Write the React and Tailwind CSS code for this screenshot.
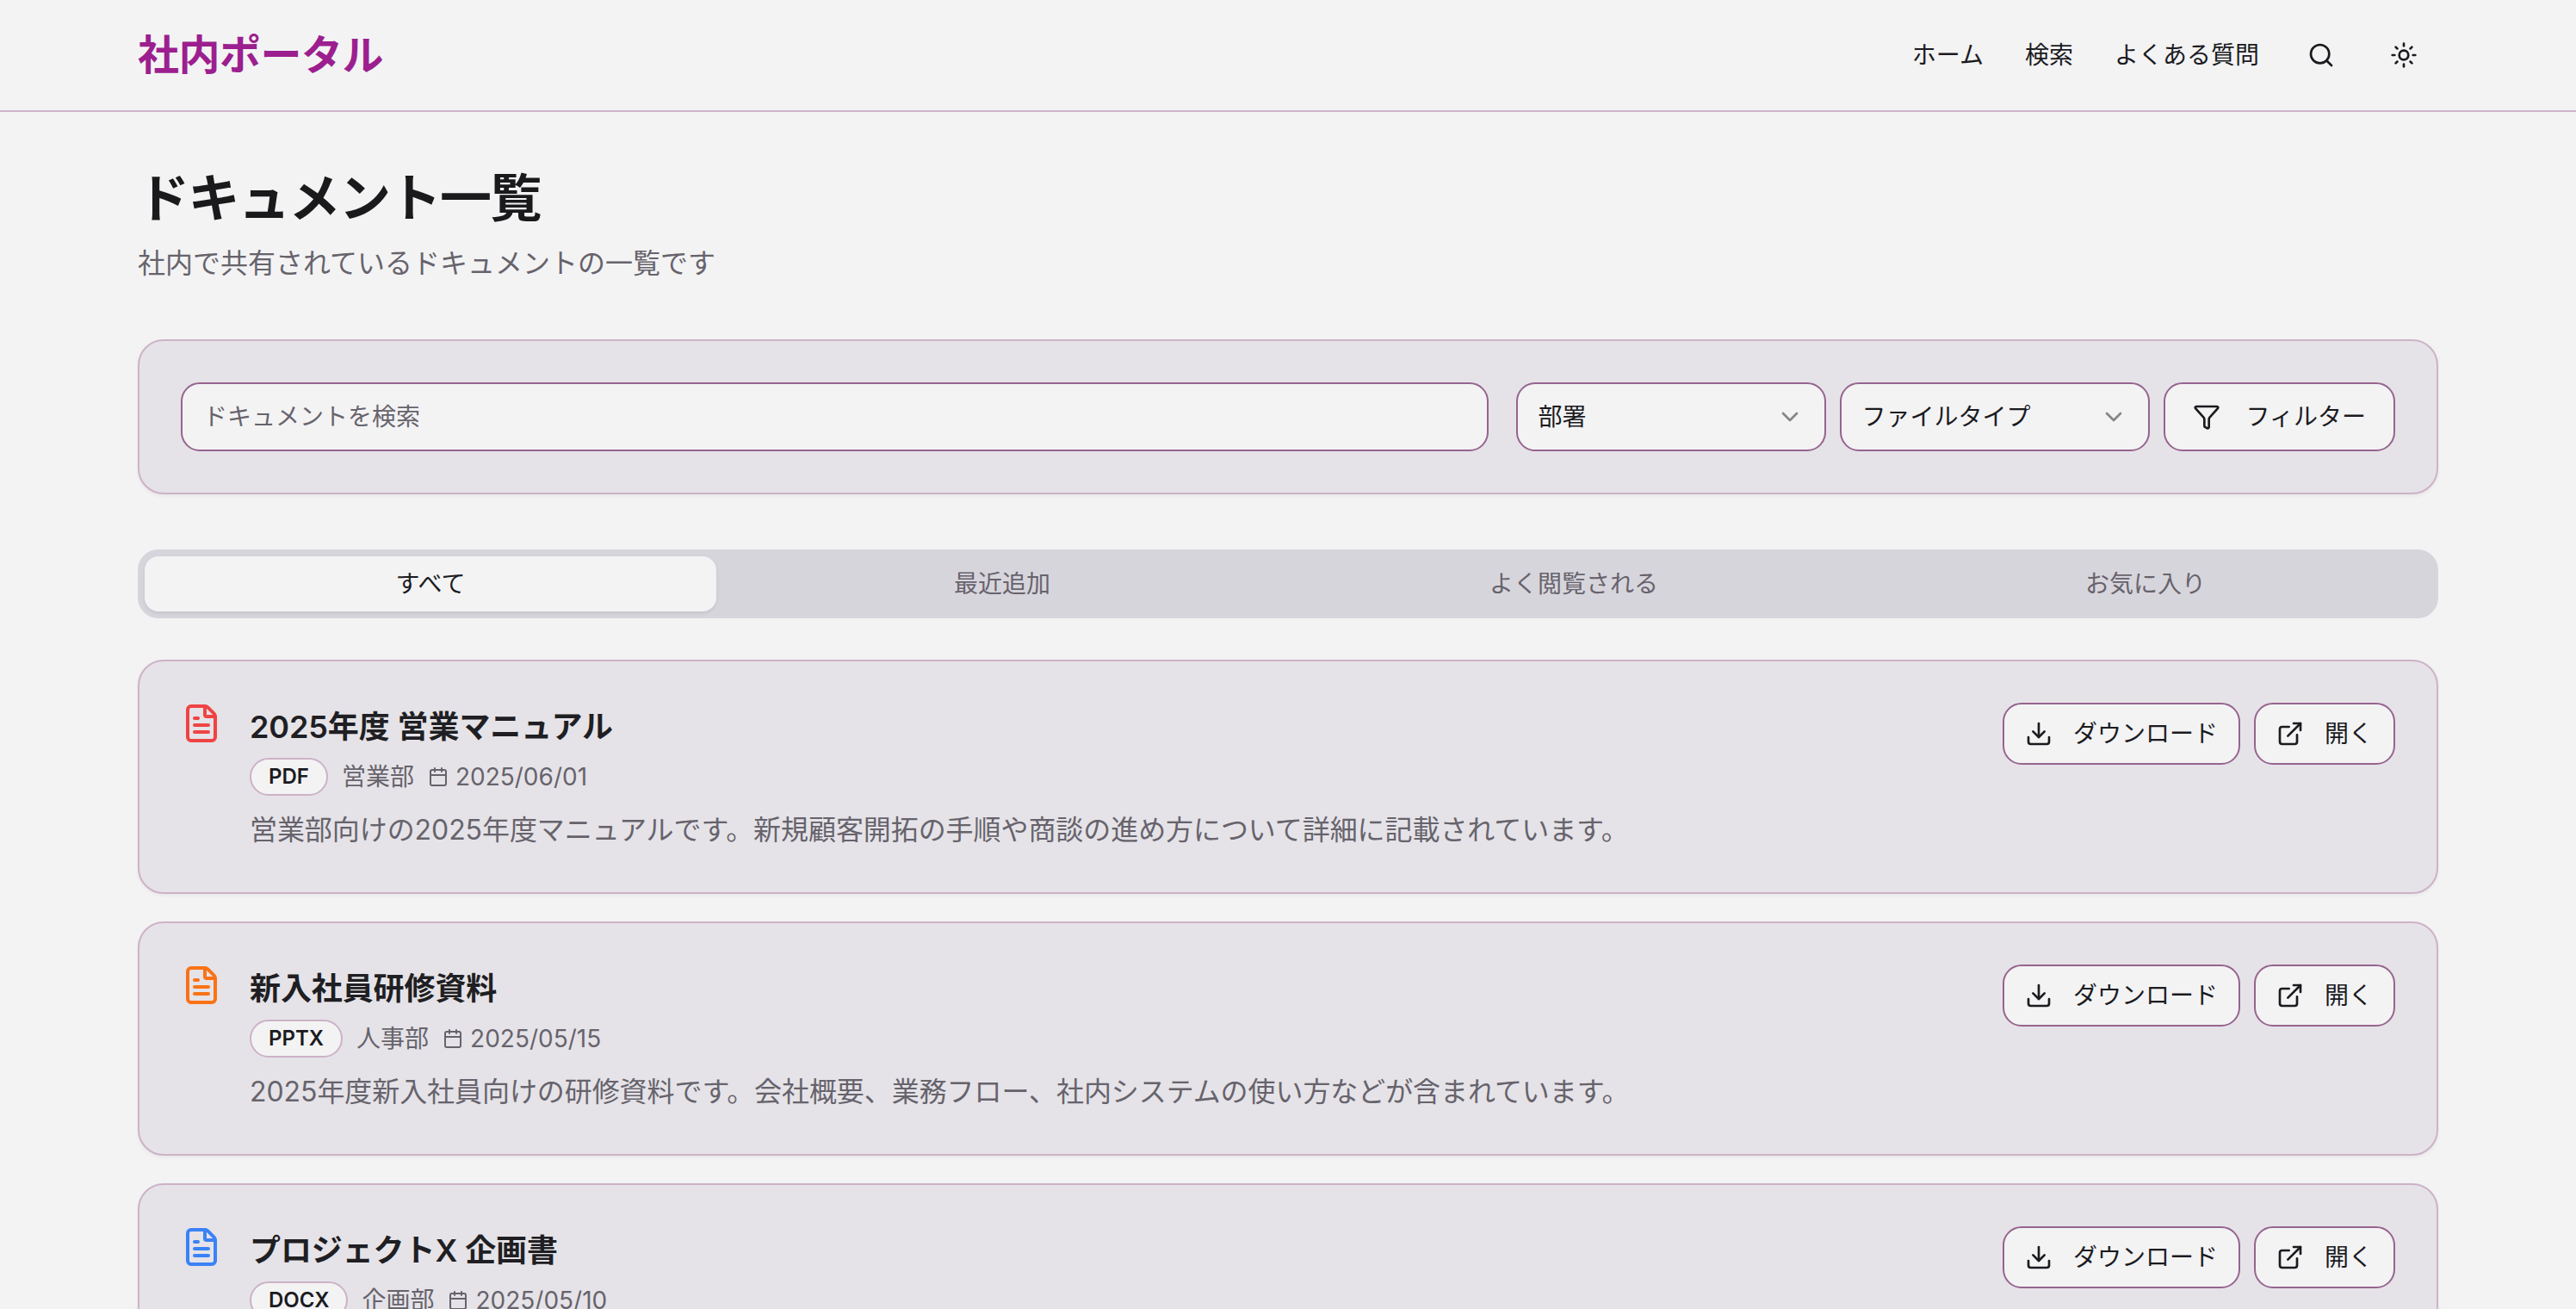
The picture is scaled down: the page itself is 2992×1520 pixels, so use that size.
import React from "react";
import { Search, Sun, ChevronDown, Funnel, FileText, Calendar, Download, ExternalLink } from "lucide-react";

const docs = [
  { title: "2025年度 営業マニュアル", type: "PDF", dept: "営業部", date: "2025/06/01", color: "text-[#ef4444]", desc: "営業部向けの2025年度マニュアルです。新規顧客開拓の手順や商談の進め方について詳細に記載されています。" },
  { title: "新入社員研修資料", type: "PPTX", dept: "人事部", date: "2025/05/15", color: "text-[#f97316]", desc: "2025年度新入社員向けの研修資料です。会社概要、業務フロー、社内システムの使い方などが含まれています。" },
  { title: "プロジェクトX 企画書", type: "DOCX", dept: "企画部", date: "2025/05/10", color: "text-[#3b82f6]", desc: "プロジェクトXの企画書です。プロジェクトの目的、スケジュール、予算について記載されています。" },
];

const tabs = ["すべて", "最近追加", "よく閲覧される", "お気に入り"];

function ActionButton({ icon: Icon, label }) {
  return (
    <button className="flex h-[72px] items-center gap-6 rounded-[22px] border-2 border-[#96648e] bg-[#f3f3f4] px-6 text-[28px] leading-10 text-[#1b1b1f]">
      <Icon size={32} strokeWidth={2} />
      <span>{label}</span>
    </button>
  );
}

function SelectBox({ label }) {
  return (
    <button className="flex h-20 w-[360px] items-center justify-between rounded-[22px] border-2 border-[#96648e] bg-[#f3f3f4] px-6 text-[28px] leading-10 text-[#1b1b1f]">
      <span>{label}</span>
      <ChevronDown size={32} strokeWidth={2} className="opacity-50" />
    </button>
  );
}

function DocCard({ doc }) {
  return (
    <div className="flex justify-between rounded-[30px] border-2 border-[#cdb2c7] bg-[#e5e3e8] p-12 shadow-[0_2px_4px_rgba(0,0,0,0.05)]">
      <div className="flex gap-8">
        <FileText size={48} strokeWidth={2} className={`shrink-0 ${doc.color}`} />
        <div className="flex flex-col">
          <h3 className="text-[36px] leading-[56px] font-semibold tracking-[-0.1px] text-[#1f1f23]">{doc.title}</h3>
          <div className="mt-2 flex h-11 items-center gap-4 text-[28px] leading-10 text-[#67636c]">
            <span className="flex h-[44px] items-center rounded-full border-2 border-[#cdb2c7] bg-[#f3f3f4] px-[20px] text-[24px] leading-8 font-semibold text-[#1b1b1f]">{doc.type}</span>
            <span>{doc.dept}</span>
            <span className="flex items-center gap-2">
              <Calendar size={24} strokeWidth={2} />
              <span>{doc.date}</span>
            </span>
          </div>
          <p className="mt-4 text-[32px] leading-[48px] tracking-[-0.07px] text-[#67636c]">{doc.desc}</p>
        </div>
      </div>
      <div className="flex shrink-0 items-start gap-4">
        <ActionButton icon={Download} label="ダウンロード" />
        <ActionButton icon={ExternalLink} label="開く" />
      </div>
    </div>
  );
}

export default function App() {
  return (
    <div lang="ja" className="h-[1520px] overflow-hidden bg-[#f3f3f4] font-['Inter','Noto_Sans_CJK_JP',sans-serif] text-[#1b1b1f]">
      <header className="border-b-2 border-[#cfb4c9]">
        <div className="flex h-32 items-center justify-between px-40">
          <div className="text-[48px] leading-[64px] font-bold tracking-[-0.5px] text-[#9c1f8f]">社内ポータル</div>
          <nav className="flex items-center">
            <div className="flex items-center gap-12 text-[28px] leading-10">
              <a>ホーム</a>
              <a>検索</a>
              <a>よくある質問</a>
            </div>
            <div className="ml-8 flex items-center gap-4">
              <button className="flex size-20 items-center justify-center"><Search size={32} strokeWidth={2} /></button>
              <button className="flex size-20 items-center justify-center"><Sun size={32} strokeWidth={2} /></button>
            </div>
          </nav>
        </div>
      </header>

      <main className="px-40 pt-16">
        <h1 className="text-[60px] leading-[72px] font-bold tracking-tight text-[#1a1a1c]">ドキュメント一覧</h1>
        <p className="mt-4 text-[32px] leading-[48px] text-[#67636c]">社内で共有されているドキュメントの一覧です</p>

        <section className="mt-16 flex gap-8 rounded-[30px] border-2 border-[#cdb2c7] bg-[#e5e3e8] p-12 shadow-[0_2px_4px_rgba(0,0,0,0.05)]">
          <input
            placeholder="ドキュメントを検索"
            className="h-20 min-w-0 flex-1 rounded-[22px] border-2 border-[#96648e] bg-[#f3f3f4] px-6 text-[28px] outline-none placeholder:text-[#67636c]"
          />
          <div className="flex gap-4">
            <SelectBox label="部署" />
            <SelectBox label="ファイルタイプ" />
            <button className="flex h-20 items-center gap-[30px] rounded-[22px] border-2 border-[#96648e] bg-[#f3f3f4] px-8 text-[28px] leading-10">
              <Funnel size={32} strokeWidth={2} />
              <span>フィルター</span>
            </button>
          </div>
        </section>

        <div className="mt-16 grid h-20 grid-cols-4 rounded-[24px] bg-[#d7d5dc] p-2">
          {tabs.map((t, i) => (
            <button
              key={t}
              className={i === 0
                ? "rounded-[16px] bg-[#f3f3f4] text-[28px] leading-10 text-[#1b1b1f] shadow-[0_2px_4px_rgba(0,0,0,0.08)]"
                : "rounded-[16px] text-[28px] leading-10 text-[#67636c]"}
            >
              {t}
            </button>
          ))}
        </div>

        <div className="mt-12 flex flex-col gap-8">
          {docs.map((d) => <DocCard key={d.title} doc={d} />)}
        </div>
      </main>
    </div>
  );
}
